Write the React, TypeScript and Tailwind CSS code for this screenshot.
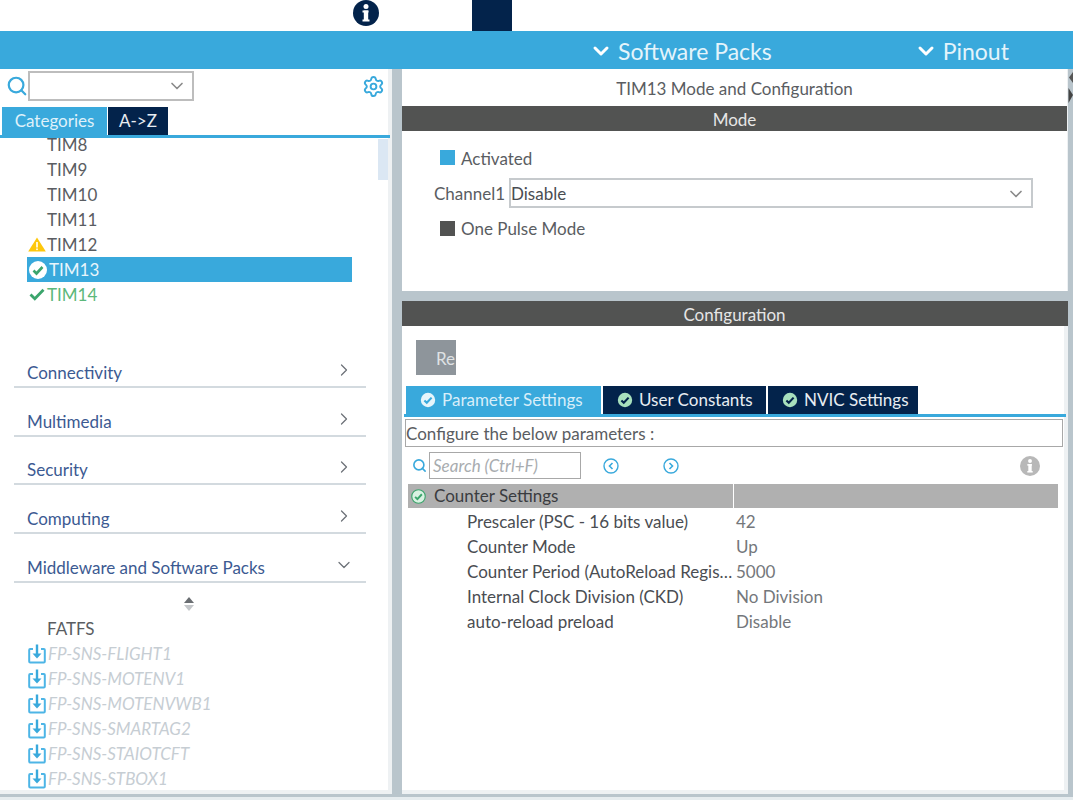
import React from "react";
import { ChevronDown, ChevronRight, Search, Settings } from "lucide-react";

const F = "font-['Lato',sans-serif]";

function Check({ size = 14, bg = "#fff", fg = "#3cb371", ring = "none" }: { size?: number; bg?: string; fg?: string; ring?: string }) {
  return (
    <svg width={size} height={size} viewBox="0 0 20 20" className="shrink-0">
      <circle cx="10" cy="10" r="9" fill={bg} stroke={ring} strokeWidth="1.5" />
      <path d="M5.5 10.5l3 3 6-6.5" fill="none" stroke={fg} strokeWidth="2.6" />
    </svg>
  );
}

function Download() {
  return (
    <svg width="18" height="20" viewBox="0 0 18 20" className="shrink-0">
      <path d="M5 5H2.2a1 1 0 0 0-1 1v11.5a1 1 0 0 0 1 1h13.6a1 1 0 0 0 1-1V6a1 1 0 0 0-1-1H13" fill="none" stroke="#4db5e6" strokeWidth="2" />
      <path d="M9 0.5v10" stroke="#39a9dc" strokeWidth="2.4" />
      <path d="M4.5 9.5h9L9 14.5z" fill="#39a9dc" />
    </svg>
  );
}

function InfoDot({ size, color }: { size: number; color: string }) {
  return (
    <svg width={size} height={size} viewBox="0 0 26 26" className="shrink-0">
      <circle cx="13" cy="13" r="13" fill={color} />
      <circle cx="13" cy="6.5" r="2.5" fill="#fff" />
      <rect x="9.5" y="10.5" width="6" height="2" fill="#fff" />
      <rect x="10.8" y="10.5" width="4.4" height="10" fill="#fff" />
      <rect x="9.5" y="19.5" width="7" height="2" fill="#fff" />
    </svg>
  );
}

function TimRow({ label, icon, active, green }: { label: string; icon?: React.ReactNode; active?: boolean; green?: boolean }) {
  return (
    <div className={`flex h-[25px] w-[325px] shrink-0 items-center ${active ? "bg-[#39a9dc] text-[#e8f5fb]" : green ? "text-[#5cb87a]" : "text-[#5a5d62]"}`}>
      <div className={`flex shrink-0 items-center justify-center ${active ? "w-[22px]" : "w-[20px]"}`}>{icon}</div>
      <span>{label}</span>
    </div>
  );
}

function Category({ label, open }: { label: string; open?: boolean }) {
  return (
    <div className="flex h-[48.75px] shrink-0 items-end justify-between border-b-2 border-[#d3dadf] pb-[3px] pr-[14px] pl-[13px] text-[#3c5a92]">
      <span>{label}</span>
      {open ? <ChevronDown size={20} className="mb-[3px] -mr-[2px] text-[#6d7278]" strokeWidth={1.5} /> : <ChevronRight size={20} className="mb-[3px] -mr-[2px] text-[#6d7278]" strokeWidth={1.5} />}
    </div>
  );
}

function Param({ name, value }: { name: string; value: string }) {
  return (
    <div className="flex h-[25px] items-center">
      <span className="w-[328px] shrink-0 truncate pl-[59px] pr-[2px] text-[#4a4d52]">{name}</span>
      <span className="text-[#74777b]">{value}</span>
    </div>
  );
}

function ConfigTab({ label, active, w }: { label: string; active?: boolean; w: string }) {
  return (
    <div className={`flex h-[28px] items-center gap-[6px] pl-[14px] ${w} ${active ? "bg-[#39a9dc] text-[#d8eef9]" : "ml-[2px] bg-[#03234b] text-[#e8edf2]"}`}>
      <Check size={16} fg={active ? "#39a9dc" : "#03234b"} bg={active ? "#e6f5fb" : "#a8e0bd"} />
      <span>{label}</span>
    </div>
  );
}

export default function App() {
  const fp = ["FP-SNS-FLIGHT1", "FP-SNS-MOTENV1", "FP-SNS-MOTENVWB1", "FP-SNS-SMARTAG2", "FP-SNS-STAIOTCFT", "FP-SNS-STBOX1"];
  return (
    <div className={`flex h-[800px] w-[1073px] flex-col overflow-hidden bg-[#b9c5cc] text-[17px] leading-[20px] ${F}`}>
      <div className="flex h-[31px] shrink-0 bg-white">
        <div className="ml-[353px]">
          <InfoDot size={26} color="#03234b" />
        </div>
        <div className="ml-[93px] h-[31px] w-[40px] bg-[#03234b]" />
      </div>

      <div className="flex h-[38px] shrink-0 items-center bg-[#39a9dc] pt-[2px] text-[23px] text-[#e4f4fb]">
        <div className="ml-[589px] flex items-center gap-[5px]">
          <ChevronDown size={24} strokeWidth={3} className="text-white" />
          <span>Software Packs</span>
        </div>
        <div className="ml-[142px] flex items-center gap-[5px]">
          <ChevronDown size={24} strokeWidth={3} className="text-white" />
          <span>Pinout</span>
        </div>
      </div>

      <div className="flex h-[728px] shrink-0 pb-[3px]">
        <div className="flex w-[392px] shrink-0 flex-col border-r-4 border-b-4 border-[#eef1f3] bg-white">
          <div className="flex h-[38px] shrink-0 items-start pl-[6px] pr-[3px] pt-[2px]">
            <Search size={22} strokeWidth={2.4} className="mt-[4px] shrink-0 text-[#39a9dc]" />
            <div className="flex h-[30px] w-[166px] items-center justify-end border-2 border-[#bdbdbd] pr-[5px]">
              <ChevronDown size={20} className="text-[#8a8a8a]" />
            </div>
            <Settings size={23} className="ml-auto mt-[4px] text-[#39a9dc]" />
          </div>
          <div className="flex h-[28px] shrink-0 pl-[2px]">
            <div className="flex w-[105px] items-center justify-center bg-[#39a9dc] text-[#dff1fa]">Categories</div>
            <div className="ml-px flex w-[60px] items-center justify-center bg-[#03234b] text-[#e8edf2]">A-&gt;Z</div>
          </div>
          <div className="h-[3px] w-[390px] shrink-0 bg-[#39a9dc]" />

          <div className="relative h-[170px] shrink-0 overflow-hidden pl-[27px]">
            <div className="-mt-[6px] flex flex-col">
              <TimRow label="TIM8" />
              <TimRow label="TIM9" />
              <TimRow label="TIM10" />
              <TimRow label="TIM11" />
              <TimRow
                label="TIM12"
                icon={
                  <svg width="18" height="15" viewBox="0 0 18 15">
                    <path d="M9 0.5L17.8 14.5H0.2z" fill="#fdc70c" />
                    <rect x="8.2" y="5" width="1.6" height="5.5" fill="#fff" />
                    <rect x="8.2" y="11.5" width="1.6" height="1.6" fill="#fff" />
                  </svg>
                }
              />
              <TimRow label="TIM13" active icon={<Check size={20} bg="#fff" fg="#3ba56c" />} />
              <TimRow
                label="TIM14"
                green
                icon={
                  <svg width="16" height="13" viewBox="0 0 16 13">
                    <path d="M1.5 6.5l4.3 4.3 8.7-9" fill="none" stroke="#3ba56c" strokeWidth="2.8" />
                  </svg>
                }
              />
            </div>
            <div className="absolute right-0 top-[1px] h-[41px] w-[10px] bg-[#dbe7f3]" />
          </div>

          <div className="ml-[14px] mt-[31px] flex w-[352px] flex-col">
            <Category label="Connectivity" />
            <Category label="Multimedia" />
            <Category label="Security" />
            <Category label="Computing" />
            <Category label="Middleware and Software Packs" open />
          </div>

          <div className="flex h-[34px] w-[377px] shrink-0 items-start justify-center pt-[13px]">
            <svg width="12" height="16" viewBox="0 0 12 16">
              <path d="M6 1l5 6H1z" fill="#6a6e72" />
              <path d="M6 15l5-6H1z" fill="#c4c7ca" />
            </svg>
          </div>
          <div className="flex flex-col pl-[27px]">
            <TimRow label="FATFS" />
            {fp.map((f) => (
              <div key={f} className="flex h-[25px] items-center italic text-[#c6cdd3]">
                <div className="flex w-[21px] shrink-0 justify-start pl-[1px]">
                  <Download />
                </div>
                <span>{f}</span>
              </div>
            ))}
          </div>
        </div>

        <div className="w-[10px] shrink-0" />

        <div className="flex w-[666px] shrink-0 flex-col text-[#5a5d62]">
          <div className="flex h-[222px] shrink-0 flex-col border-r border-[#eef1f3] bg-white">
            <div className="flex h-[37px] shrink-0 items-center justify-center pt-[2px]">TIM13 Mode and Configuration</div>
            <div className="flex h-[25px] shrink-0 items-center justify-center bg-[#525352] pt-[2px] text-[#e6e6e6]">Mode</div>
            <div className="flex h-[54px] shrink-0 items-center pl-[38px] pt-[1px]">
              <div className="mb-[2px] mr-[6px] size-[15px] bg-[#39a9dc]" />
              <span>Activated</span>
            </div>
            <div className="-mt-[7px] flex h-[30px] shrink-0 items-center pl-[32px]">
              <span className="w-[75px] shrink-0 pt-[1px]">Channel1</span>
              <div className="flex h-[30px] w-[524px] items-center justify-between border-2 border-[#c6cacd] pr-[5px] pt-[1px]">
                <span className="text-[#4a4d52]">Disable</span>
                <ChevronDown size={20} className="text-[#8a8a8a]" />
              </div>
            </div>
            <div className="flex h-[42px] shrink-0 items-center pl-[38px]">
              <div className="mb-[2px] mr-[6px] size-[15px] bg-[#525352]" />
              <span>One Pulse Mode</span>
            </div>
          </div>

          <div className="h-[10px] shrink-0" />

          <div className="flex min-h-0 flex-1 flex-col">
            <div className="flex h-[25px] shrink-0 items-center justify-center bg-[#525352] pr-px pt-[2px] text-[#e6e6e6]">Configuration</div>
            <div className="flex min-h-0 flex-1 flex-col border-r-4 border-b-4 border-[#eef1f3] bg-white">
              <div className="ml-[14px] mt-[14px] flex h-[35px] w-[40px] shrink-0 items-center overflow-hidden bg-[#8e959b] pl-[20px] pt-[2px] text-[#dfe2e4]">
                <span className="whitespace-nowrap">Re</span>
              </div>
              <div className="ml-[4px] mt-[11px] flex h-[28px] shrink-0">
                <ConfigTab label="Parameter Settings" active w="w-[195px]" />
                <ConfigTab label="User Constants" w="w-[163px]" />
                <ConfigTab label="NVIC Settings" w="w-[150px]" />
              </div>
              <div className="-mr-[2px] ml-[2px] h-[3px] shrink-0 bg-[#39a9dc]" />
              <div className="ml-[3px] mr-px mt-[2px] flex h-[28px] shrink-0 items-center border border-[#a8a8a8] pt-[2px]">
                Configure the below parameters :
              </div>
              <div className="flex h-[37px] shrink-0 items-center pl-[10px] pr-[24px]">
                <Search size={15} strokeWidth={2.6} className="shrink-0 text-[#39a9dc]" />
                <div className="ml-[2px] flex h-[27px] w-[152px] items-center border border-[#a8a8a8] pl-[3px] italic text-[#a8acaf]">Search (Ctrl+F)</div>
                <svg width="16" height="16" viewBox="0 0 16 16" className="ml-[22px]">
                  <circle cx="8" cy="8" r="7" fill="none" stroke="#39a9dc" strokeWidth="1.4" />
                  <path d="M9.5 5L6.5 8l3 3" fill="none" stroke="#39a9dc" strokeWidth="1.6" />
                </svg>
                <svg width="16" height="16" viewBox="0 0 16 16" className="ml-[44px]">
                  <circle cx="8" cy="8" r="7" fill="none" stroke="#39a9dc" strokeWidth="1.4" />
                  <path d="M6.5 5l3 3-3 3" fill="none" stroke="#39a9dc" strokeWidth="1.6" />
                </svg>
                <div className="ml-auto">
                  <InfoDot size={20} color="#b8b8b8" />
                </div>
              </div>
              <div className="flex h-[24px] shrink-0 pl-[6px] pr-[6px] text-[#3a3c40]">
                <div className="flex w-[325px] items-center gap-[8px] bg-[#b0b0b0] pl-[3px]">
                  <Check size={15} bg="#d9f2e2" fg="#3ba56c" ring="#3ba56c" />
                  <span>Counter Settings</span>
                </div>
                <div className="ml-px flex-1 bg-[#b0b0b0]" />
              </div>
              <div className="flex flex-col pl-[6px] pt-[1px]">
                <Param name="Prescaler (PSC - 16 bits value)" value="42" />
                <Param name="Counter Mode" value="Up" />
                <Param name="Counter Period (AutoReload Register - 16 bits value)" value="5000" />
                <Param name="Internal Clock Division (CKD)" value="No Division" />
                <Param name="auto-reload preload" value="Disable" />
              </div>
            </div>
          </div>
        </div>

        <div className="relative w-[5px] shrink-0">
          <svg width="5" height="36" viewBox="0 0 5 36" className="absolute left-0 top-0">
            <path d="M5 3L1 8.5 5 14z" fill="#555" />
            <path d="M0.5 19l4.5 7-4.5 8z" fill="#444" />
          </svg>
        </div>
      </div>
      <div className="h-[3px] shrink-0 bg-[#e6ecef]" />
    </div>
  );
}
